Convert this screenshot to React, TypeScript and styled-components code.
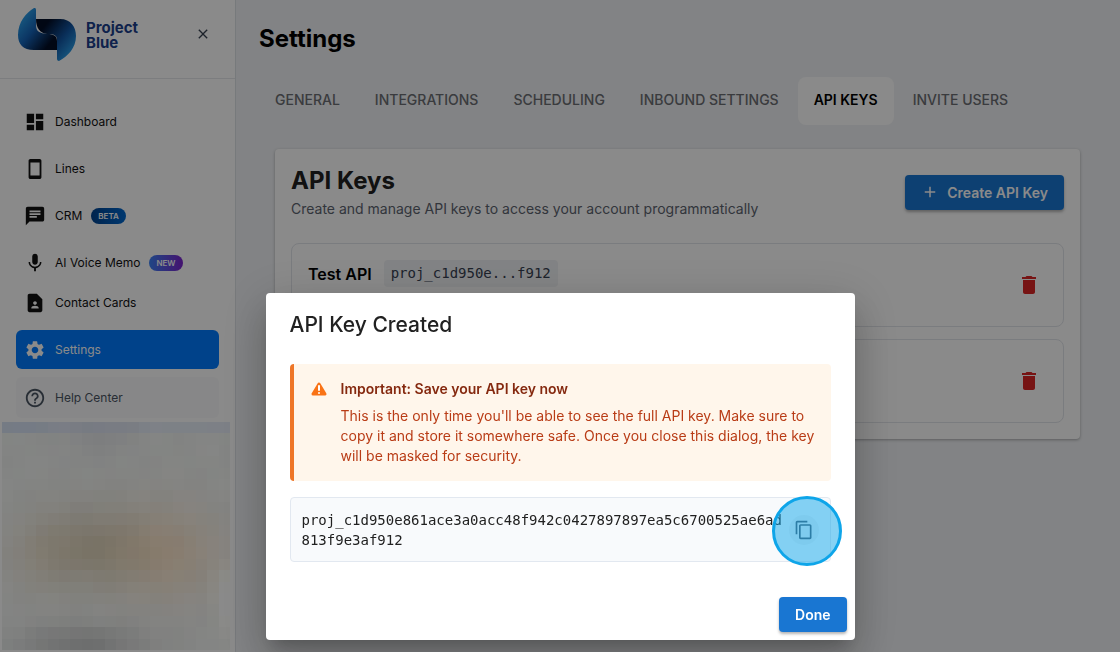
import React from 'react';
import styled, { createGlobalStyle } from 'styled-components';
import {
  MdAdd, MdChat, MdClose, MdContactPage, MdContentCopy, MdDashboard, MdDelete,
  MdHelpOutline, MdMic, MdSettings, MdStayCurrentPortrait,
} from 'react-icons/md';

const sans = `Inter, "Liberation Sans", sans-serif`;
const mono = `"DejaVu Sans Mono", "Liberation Mono", monospace`;

const GlobalStyle = createGlobalStyle`
  * { box-sizing: border-box; }
  body { margin: 0; font-family: ${sans}; background: #f0f2f5; color: #000; overflow: hidden; }
  button { font-family: inherit; cursor: pointer; border: 0; padding: 0; background: none; color: inherit; }
  h1, h2, h3, p, ul { margin: 0; padding: 0; }
`;

const Page = styled.div`
  display: flex;
  height: 100vh;
  overflow: hidden;
`;

const Sidebar = styled.aside`
  width: 235px;
  flex: none;
  display: flex;
  flex-direction: column;
  background: #fff;
  box-shadow: 1px 0 0 #dde1e6;
`;

const SidebarHeader = styled.header`
  height: 79px;
  flex: none;
  display: flex;
  align-items: flex-start;
  gap: 9px;
  padding: 8px 24px 0 17px;
  border-bottom: 1px solid #e5e7eb;
`;

const Brand = styled.span`
  flex: 1;
  padding-top: 12px;
  font-size: 15px;
  line-height: 15px;
  font-weight: 700;
  color: #1c3f8c;
`;

const CloseButton = styled.button`
  display: flex;
  margin-top: 18px;
  color: #374151;
`;

const Nav = styled.nav`
  flex: none;
  display: flex;
  flex-direction: column;
  gap: 8px;
  padding: 23px 16px 4px;
`;

const NavGroup = styled.div`
  display: flex;
  flex-direction: column;
  gap: 1px;
`;

const NavLink = styled.a<{ $tone?: 'active' | 'muted' }>`
  display: flex;
  align-items: center;
  height: ${p => (p.$tone === 'muted' ? 41 : 39)}px;
  gap: 9px;
  padding: 0 8px;
  border-radius: 6px;
  text-decoration: none;
  font-size: 12px;
  color: ${p => (p.$tone === 'active' ? '#fff' : p.$tone === 'muted' ? '#4b5563' : '#111')};
  background: ${p => (p.$tone === 'active' ? '#007bff' : p.$tone === 'muted' ? '#f9fafb' : 'transparent')};
`;

const Badge = styled.span<{ $from: string; $to: string }>`
  display: flex;
  align-items: center;
  height: 16px;
  padding: 0 7px;
  border-radius: 8px;
  font-size: 8px;
  font-weight: 600;
  color: #fff;
  background: linear-gradient(90deg, ${p => p.$from}, ${p => p.$to});
`;

const Profile = styled.div`
  flex: 1;
  min-height: 0;
  padding: 0 5px 0 2px;
  svg { display: block; width: 100%; }
`;

const Main = styled.main`
  flex: 1;
  min-width: 0;
  padding: 23px 24px;
`;

const PageTitle = styled.h1`
  font-size: 24px;
  line-height: 32px;
  font-weight: 700;
`;

const Tabs = styled.div`
  display: flex;
  gap: 3px;
  margin-top: 22px;
`;

const Tab = styled.button<{ $active?: boolean }>`
  height: 48px;
  padding: 0 16px 3px;
  border-radius: 8px;
  font-size: 14px;
  font-weight: ${p => (p.$active ? 600 : 500)};
  white-space: nowrap;
  color: ${p => (p.$active ? '#000' : '#6b6e73')};
  background: ${p => (p.$active ? '#fff' : 'transparent')};
`;

const Card = styled.section`
  margin: 24px 16px 0;
  padding: 16px;
  background: #fff;
  border-radius: 4px;
  box-shadow: 0 1px 3px rgba(0, 0, 0, 0.3);
`;

const CardHeader = styled.div`
  display: flex;
  justify-content: space-between;
  align-items: center;
  margin-bottom: 24px;
`;

const CardTitle = styled.h2`
  font-size: 24px;
  line-height: 32px;
  font-weight: 700;
  color: #212121;
`;

const CardText = styled.p`
  margin-top: 2px;
  font-size: 14px;
  line-height: 20px;
  color: #5d6470;
`;

const PrimaryButton = styled.button`
  display: flex;
  align-items: center;
  gap: 8px;
  height: 35px;
  padding: 0 16px;
  border-radius: 4px;
  font-size: 14px;
  font-weight: 600;
  color: #fff;
  background: #1976d2;
  box-shadow: 0 2px 3px rgba(0, 0, 0, 0.3);
`;

const KeyList = styled.ul`
  display: flex;
  flex-direction: column;
  gap: 12px;
  list-style: none;
`;

const KeyRow = styled.li`
  display: flex;
  justify-content: space-between;
  align-items: center;
  height: 84px;
  padding: 16px 22px 16px 16px;
  border: 1px solid #e2e5ea;
  border-radius: 8px;
`;

const KeyInfo = styled.div`
  align-self: flex-start;
  display: flex;
  align-items: center;
  gap: 12px;
`;

const KeyName = styled.h3`
  font-size: 16px;
  font-weight: 600;
`;

const KeyChip = styled.code`
  padding: 4px 7px;
  border-radius: 4px;
  background: #f1f3f6;
  color: #374151;
  font: 14px/19px ${mono};
`;

const DeleteButton = styled.button`
  display: flex;
  color: #dc2626;
`;

const Backdrop = styled.div`
  position: fixed;
  inset: 0;
  display: flex;
  justify-content: center;
  align-items: flex-end;
  padding: 12px 32px;
  background: rgba(0, 0, 0, 0.46);
`;

const Dialog = styled.div`
  width: 100%;
  max-width: 589px;
  background: #fff;
  border-radius: 4px;
  box-shadow: 0 11px 15px -7px rgba(0, 0, 0, 0.2), 0 24px 38px 3px rgba(0, 0, 0, 0.14), 0 9px 46px 8px rgba(0, 0, 0, 0.12);
`;

const DialogTitle = styled.h2`
  padding: 16px 24px;
  font-size: 21px;
  line-height: 31px;
  font-weight: 500;
  color: #212121;
`;

const DialogBody = styled.div`
  display: flex;
  flex-direction: column;
  gap: 16px;
  padding: 8px 24px 27px;
`;

const Alert = styled.div`
  display: flex;
  gap: 13px;
  padding: 15px 16px;
  border-left: 4px solid #ee7628;
  border-radius: 4px;
  background: #fff6eb;
  color: #b93c16;
  svg { flex: none; }
`;

const AlertTitle = styled.h3`
  margin-bottom: 8px;
  font-size: 14px;
  line-height: 19px;
  font-weight: 600;
  color: #85290f;
`;

const AlertText = styled.p`
  font-size: 14px;
  line-height: 20px;
`;

const KeyBox = styled.div`
  display: flex;
  align-items: center;
  height: 65px;
  padding: 0 11px;
  border: 1px solid #e2e8f0;
  border-radius: 4px;
  background: #f8fafc;
`;

const FullKey = styled.code`
  flex: 1;
  word-break: break-all;
  color: #212121;
  font: 14px/20px ${mono};
`;

const CopyButton = styled.button`
  position: relative;
  display: flex;
  padding: 5px;
  border-radius: 50%;
  background: rgba(0, 0, 0, 0.04);
  color: #4b5563;
`;

const Highlight = styled.span`
  position: absolute;
  left: 50%;
  top: 50%;
  width: 70px;
  height: 70px;
  margin: -34px 0 0 -32px;
  border: 3px solid #0ea5e9;
  border-radius: 50%;
  background: rgba(14, 165, 233, 0.5);
`;

const DialogActions = styled.div`
  display: flex;
  justify-content: flex-end;
  padding: 8px;
`;

function Logo() {
  return (
    <svg width="60" height="53" viewBox="0 0 60 53" aria-hidden="true">
      <defs>
        <linearGradient id="wingA" gradientUnits="userSpaceOnUse" x1="4" y1="10" x2="34" y2="34">
          <stop offset="0" stopColor="#2aa0ea" />
          <stop offset="0.45" stopColor="#1563b8" />
          <stop offset="1" stopColor="#020d26" />
        </linearGradient>
        <linearGradient id="wingB" gradientUnits="userSpaceOnUse" x1="56" y1="44" x2="26" y2="20">
          <stop offset="0" stopColor="#2aa0ea" />
          <stop offset="0.45" stopColor="#1256a4" />
          <stop offset="1" stopColor="#020d26" />
        </linearGradient>
      </defs>
      <path d="M19 11h24c11 0 16 8 16 17 0 12-8 20-17 25-1 0-2-1-2-2V32c0-5-3-6-10-6-7-1-11-6-11-15Z" fill="url(#wingB)" />
      <path d="M19 2v15c0 7 4 8 11 9 7 0 10 2 10 7v9H17C6 42 1 36 1 27 1 14 9 5 17 0c1 0 2 0 2 2Z" fill="url(#wingA)" />
    </svg>
  );
}

function WarningIcon() {
  return (
    <svg width="18" height="19" viewBox="0 0 18 19" aria-hidden="true">
      <path d="M9 5 15 15H3Z" fill="#f97316" stroke="#f97316" strokeWidth="3" strokeLinejoin="round" />
      <path d="M9 7v4" stroke="#fff" strokeWidth="2" strokeLinecap="round" />
      <circle cx="9" cy="14" r="1" fill="#fff" />
    </svg>
  );
}

type Blob = [x: number, y: number, rx: number, ry: number, r: number, g: number, b: number];

const blobs: Blob[] = [
  [7.5, 10.5, 4.5, 3.5, -20, -30, -48],
  [14, 11, 4.5, 4, 10, -12, -34],
  [3, 11, 3, 3.5, 0, -8, -18],
  [6.5, 19, 5.5, 1.7, -40, -40, -38],
  [19, 15, 0.9, 3, 22, 20, 16],
  [1, 0, 3, 0.6, -18, -12, -4],
  [8, 0.5, 3, 2, -12, -12, -8],
];

function Mosaic() {
  const size = 20;
  const cells: React.ReactNode[] = [];
  for (let y = 0; y < size; y++) {
    for (let x = 0; x < size; x++) {
      const c = y === 0 ? [232, 238, 248] : [243, 245, 243];
      for (const [bx, by, rx, ry, r, g, b] of blobs) {
        const w = Math.exp(-(((x - bx) / rx) ** 2) - ((y - by) / ry) ** 2);
        c[0] += r * w;
        c[1] += g * w;
        c[2] += b * w;
      }
      const grain = Math.sin(x * 1.3 + y * 0.4) * Math.cos(y * 1.1 - x * 0.3) * 2;
      const fill = `rgb(${c.map(v => Math.max(0, Math.min(255, Math.round(v + grain)))).join(',')})`;
      cells.push(<rect key={`${x}-${y}`} x={x} y={y} width={1} height={1} fill={fill} />);
    }
  }
  return <svg viewBox="0 0 20 20" shapeRendering="crispEdges" aria-hidden="true">{cells}</svg>;
}

export default function App() {
  return (
    <>
      <GlobalStyle />
      <Page>
        <Sidebar>
          <SidebarHeader>
            <Logo />
            <Brand>Project<br />Blue</Brand>
            <CloseButton aria-label="Close menu"><MdClose size={16} /></CloseButton>
          </SidebarHeader>
          <Nav>
            <NavLink href="#dashboard"><MdDashboard size={22} />Dashboard</NavLink>
            <NavLink href="#lines"><MdStayCurrentPortrait size={22} />Lines</NavLink>
            <NavLink href="#crm"><MdChat size={22} />CRM<Badge $from="#00438f" $to="#0068cf">BETA</Badge></NavLink>
            <NavGroup>
              <NavLink href="#voice"><MdMic size={22} />AI Voice Memo<Badge $from="#3b82f6" $to="#7e22ce">NEW</Badge></NavLink>
              <NavLink href="#contacts"><MdContactPage size={22} />Contact Cards</NavLink>
            </NavGroup>
            <NavLink href="#settings" $tone="active"><MdSettings size={22} />Settings</NavLink>
            <NavLink href="#help" $tone="muted"><MdHelpOutline size={22} />Help Center</NavLink>
          </Nav>
          <Profile><Mosaic /></Profile>
        </Sidebar>
        <Main>
          <PageTitle>Settings</PageTitle>
          <Tabs role="tablist">
            {['GENERAL', 'INTEGRATIONS', 'SCHEDULING', 'INBOUND SETTINGS', 'API KEYS', 'INVITE USERS'].map(t => (
              <Tab key={t} role="tab" aria-selected={t === 'API KEYS'} $active={t === 'API KEYS'}>{t}</Tab>
            ))}
          </Tabs>
          <Card>
            <CardHeader>
              <div>
                <CardTitle>API Keys</CardTitle>
                <CardText>Create and manage API keys to access your account programmatically</CardText>
              </div>
              <PrimaryButton><MdAdd size={18} />Create API Key</PrimaryButton>
            </CardHeader>
            <KeyList>
              <KeyRow>
                <KeyInfo>
                  <KeyName>Test API</KeyName>
                  <KeyChip>proj_c1d950e...f912</KeyChip>
                </KeyInfo>
                <DeleteButton aria-label="Delete key"><MdDelete size={24} /></DeleteButton>
              </KeyRow>
              <KeyRow>
                <KeyInfo />
                <DeleteButton aria-label="Delete key"><MdDelete size={24} /></DeleteButton>
              </KeyRow>
            </KeyList>
          </Card>
        </Main>
      </Page>
      <Backdrop>
        <Dialog role="dialog" aria-modal="true" aria-labelledby="dialog-title">
          <DialogTitle id="dialog-title">API Key Created</DialogTitle>
          <DialogBody>
            <Alert>
              <WarningIcon />
              <div>
                <AlertTitle>Important: Save your API key now</AlertTitle>
                <AlertText>
                  This is the only time you'll be able to see the full API key. Make sure to copy it and store it
                  somewhere safe. Once you close this dialog, the key will be masked for security.
                </AlertText>
              </div>
            </Alert>
            <KeyBox>
              <FullKey>proj_c1d950e861ace3a0acc48f942c0427897897ea5c6700525ae6ad813f9e3af912</FullKey>
              <CopyButton aria-label="Copy key"><MdContentCopy size={20} /><Highlight /></CopyButton>
            </KeyBox>
          </DialogBody>
          <DialogActions><PrimaryButton>Done</PrimaryButton></DialogActions>
        </Dialog>
      </Backdrop>
    </>
  );
}
